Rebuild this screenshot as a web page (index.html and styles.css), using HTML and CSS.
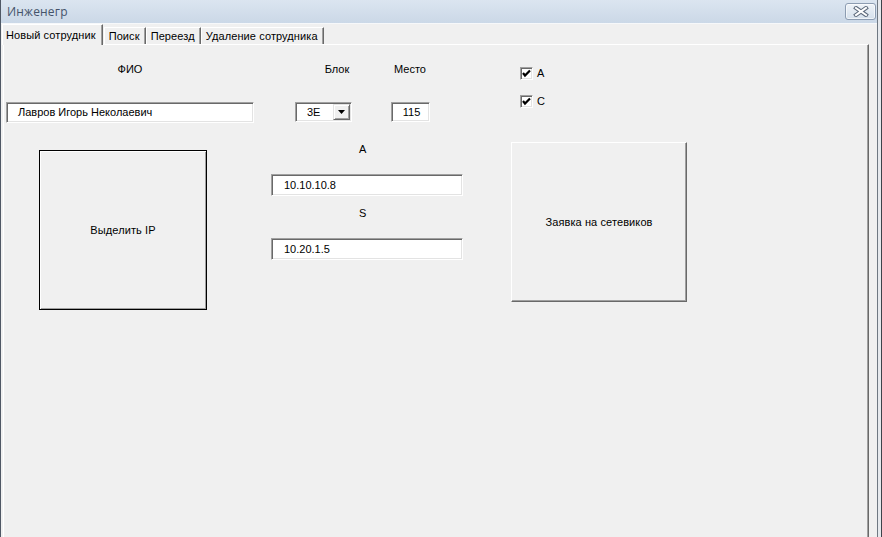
FILE: index.html
```html
<!DOCTYPE html>
<html lang="ru">
<head>
<meta charset="utf-8">
<title>Инженегр</title>
<link rel="stylesheet" href="styles.css">
</head>
<body>
<div class="window">
  <div class="main">
    <div class="titlebar">
      <span class="title">Инженегр</span>
      <div class="close">
        <svg width="16" height="11" viewBox="0 0 16 11">
          <path d="M3 2 L13 9 M13 2 L3 9" stroke="#5d6a7c" stroke-width="4" stroke-linecap="square" fill="none"/>
          <path d="M3 2 L13 9 M13 2 L3 9" stroke="#ffffff" stroke-width="2" stroke-linecap="square" fill="none"/>
        </svg>
      </div>
    </div>
    <div class="client">
      <div class="tabs">
        <div class="tab active">Новый сотрудник</div>
        <div class="tab">Поиск</div>
        <div class="tab">Переезд</div>
        <div class="tab">Удаление сотрудника</div>
      </div>
      <div class="panel">
        <div class="col col-fio">
          <div class="label label-fio">ФИО</div>
          <div class="field field-fio">Лавров Игорь Неколаевич</div>
          <div class="btn btn-default btn-ip"><span>Выделить IP</span></div>
        </div>
        <div class="col col-net">
          <div class="row row-labels">
            <div class="label label-block">Блок</div>
            <div class="label label-place">Место</div>
          </div>
          <div class="row row-inputs">
            <div class="combo">
              <span class="combo-text">3E</span>
              <span class="combo-btn">
                <svg width="7" height="4" viewBox="0 0 7 4"><path d="M0 0 H7 L3.5 4 Z" fill="#000"/></svg>
              </span>
            </div>
            <div class="field field-place">115</div>
          </div>
          <div class="label label-a">A</div>
          <div class="field field-ip">10.10.10.8</div>
          <div class="label label-s">S</div>
          <div class="field field-ip field-ip2">10.20.1.5</div>
        </div>
        <div class="col col-check">
          <div class="check-row check-first">
            <span class="checkbox">
              <svg width="9" height="9" viewBox="0 0 9 9"><path d="M1 4 L3 6.5 L8 1.5" stroke="#000" stroke-width="2.2" fill="none"/></svg>
            </span>
            <span class="check-label">A</span>
          </div>
          <div class="check-row check-second">
            <span class="checkbox">
              <svg width="9" height="9" viewBox="0 0 9 9"><path d="M1 4 L3 6.5 L8 1.5" stroke="#000" stroke-width="2.2" fill="none"/></svg>
            </span>
            <span class="check-label">C</span>
          </div>
          <div class="btn btn-request"><span>Заявка на сетевиков</span></div>
        </div>
      </div>
    </div>
  </div>
</div>
</body>
</html>
```

FILE: styles.css
```css
* { box-sizing: border-box; }

html, body {
  margin: 0;
  padding: 0;
  background: #f0f0f0;
}

body {
  font-family: "Liberation Sans", Arial, sans-serif;
  font-size: 11px;
  line-height: 13px;
  color: #000;
}

.window {
  width: 882px;
  height: 537px;
  display: flex;
  border-left: 1px solid #4f5865;
  border-right: 1px solid #3d434b;
  padding-right: 3px;
  background: #e6e9ed;
  overflow: hidden;
}

.main {
  flex: 1;
  display: flex;
  flex-direction: column;
  border-right: 1px solid #6f7882;
}

.titlebar {
  height: 24px;
  display: flex;
  align-items: flex-start;
  justify-content: space-between;
  background: linear-gradient(#dbe5f0, #cbd8e7);
  border-bottom: 1px solid #f6f8fa;
  flex-shrink: 0;
}

.title {
  font-family: "Open Sans", "Noto Sans", sans-serif;
  font-size: 12px;
  line-height: 16px;
  color: #44536a;
  letter-spacing: 0.2px;
  margin: 4px 0 0 6px;
}

.close {
  width: 31px;
  height: 17px;
  margin: 3px 1px 0 0;
  border: 1px solid #8c9cb1;
  border-radius: 3px;
  background: linear-gradient(#eef3f8, #d5e0ec);
  box-shadow: inset 0 0 0 1px rgba(255,255,255,0.6);
  display: flex;
  align-items: center;
  justify-content: center;
}

.client {
  flex: 1;
  display: flex;
  flex-direction: column;
  background: #f0f0f0;
  padding-left: 2px;
}

.tabs {
  display: flex;
  align-items: flex-end;
  height: 20px;
  margin-left: -1px;
  position: relative;
  z-index: 1;
}

.tab {
  height: 17px;
  padding: 2px 5px 0 4px;
  border-top: 1px solid #fff;
  border-left: 1px solid #fff;
  border-right: 1px solid #696969;
  box-shadow: inset -1px 0 #a0a0a0;
  white-space: nowrap;
  background: #f0f0f0;
  letter-spacing: 0.1px;
}

.tab.active {
  height: 21px;
  margin-bottom: -1px;
  padding: 4px 6px 0 3px;
  margin-right: 1px;
}

.panel {
  flex: 1;
  width: 866px;
  display: flex;
  align-items: flex-start;
  border-top: 1px solid #fff;
  border-left: 1px solid #fff;
  border-right: 1px solid #696969;
  box-shadow: inset -1px 0 #a0a0a0;
}

.col {
  display: flex;
  flex-direction: column;
  align-items: flex-start;
}

.label {
  height: 13px;
  white-space: nowrap;
}

.field {
  background: #fff;
  border-top: 1px solid #a0a0a0;
  border-left: 1px solid #a0a0a0;
  border-right: 1px solid #fff;
  border-bottom: 1px solid #fff;
  box-shadow: inset 1px 1px #696969, inset -1px -1px #e3e3e3;
  white-space: nowrap;
}

/* Column 1 */
.col-fio {
  width: 248px;
  margin-left: 2px;
}

.label-fio {
  align-self: center;
  margin-top: 18px;
}

.field-fio {
  width: 248px;
  height: 21px;
  margin-top: 26px;
  padding: 3px 0 0 11px;
}

.btn {
  display: flex;
  align-items: center;
  justify-content: center;
  background: #f0f0f0;
  border-top: 1px solid #fff;
  border-left: 1px solid #fff;
  border-right: 1px solid #696969;
  border-bottom: 1px solid #696969;
  box-shadow: inset -1px -1px #a0a0a0;
  letter-spacing: 0.1px;
}

.btn-default {
  border: 1px solid #000;
  box-shadow: inset 1px 1px #fff, inset -1px -1px #a0a0a0;
}

.btn-ip {
  width: 168px;
  height: 160px;
  margin: 27px 0 0 33px;
}

/* Column 2 */
.col-net {
  width: 192px;
  margin-left: 17px;
}

.row {
  display: flex;
  align-items: flex-start;
}

.row-labels {
  margin-top: 18px;
}

.label-block,
.label-place {
  width: 60px;
  text-align: center;
}

.label-block { margin-left: 36px; }
.label-place { margin-left: 13px; }

.row-inputs {
  margin-top: 26px;
}

.combo {
  width: 57px;
  height: 20px;
  margin-left: 24px;
  display: flex;
  align-items: stretch;
  background: #fff;
  border-top: 1px solid #a0a0a0;
  border-left: 1px solid #a0a0a0;
  border-right: 1px solid #fff;
  border-bottom: 1px solid #fff;
  box-shadow: inset 1px 1px #696969, inset -1px -1px #e3e3e3;
  padding: 1px;
}

.combo-text {
  flex: 1;
  padding: 2px 0 0 10px;
}

.combo-btn {
  width: 17px;
  display: flex;
  align-items: center;
  justify-content: center;
  background: #f0f0f0;
  border-top: 1px solid #e3e3e3;
  border-left: 1px solid #e3e3e3;
  border-right: 1px solid #696969;
  border-bottom: 1px solid #696969;
  box-shadow: inset 1px 1px #fff, inset -1px -1px #a0a0a0;
}

.field-place {
  width: 39px;
  height: 20px;
  margin-left: 39px;
  padding-top: 3px;
  text-align: center;
  padding-left: 2px;
}

.label-a {
  margin: 21px 0 0 88px;
}

.field-ip {
  width: 192px;
  height: 22px;
  margin-top: 18px;
  padding: 4px 0 0 12px;
}

.label-s {
  margin: 11px 0 0 88px;
}

.field-ip2 {
  margin-top: 18px;
}

/* Column 3 */
.col-check {
  margin-left: 48px;
}

.check-row {
  display: flex;
  align-items: center;
  margin-left: 9px;
  height: 13px;
}

.check-first { margin-top: 22px; }
.check-second { margin-top: 15px; }

.checkbox {
  width: 13px;
  height: 13px;
  background: #fff;
  border-top: 1px solid #a0a0a0;
  border-left: 1px solid #a0a0a0;
  border-right: 1px solid #fff;
  border-bottom: 1px solid #fff;
  box-shadow: inset 1px 1px #696969, inset -1px -1px #e3e3e3;
  display: flex;
  align-items: center;
  justify-content: center;
}

.check-label {
  margin-left: 4px;
}

.btn-request {
  width: 176px;
  height: 160px;
  margin-top: 34px;
}
```
